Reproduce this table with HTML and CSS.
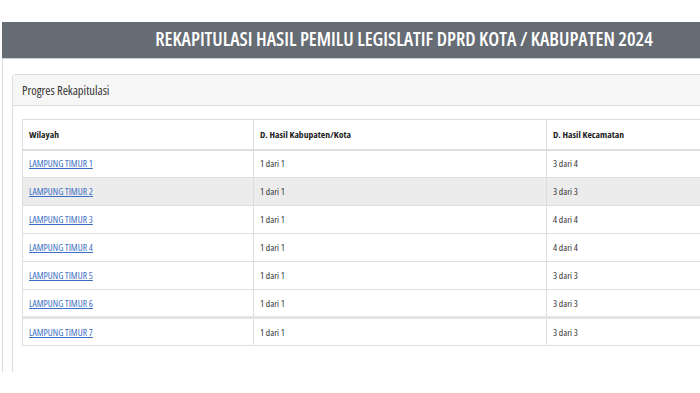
FILE: index.html
```html
<!DOCTYPE html>
<html>
<head>
<meta charset="utf-8">
<link rel="stylesheet" href="styles.css">
</head>
<body>
<div class="page">
  <header class="banner">
    <h1 class="banner-title">REKAPITULASI HASIL PEMILU LEGISLATIF DPRD KOTA / KABUPATEN 2024</h1>
  </header>
  <div class="wrap">
    <section class="card">
      <div class="card-head">Progres Rekapitulasi</div>
      <div class="card-body">
        <table class="tbl">
          <thead>
            <tr><th class="c1">Wilayah</th><th class="c2">D. Hasil Kabupaten/Kota</th><th class="c3">D. Hasil Kecamatan</th></tr>
          </thead>
          <tbody>
            <tr><td><a href="#">LAMPUNG TIMUR 1</a></td><td>1 dari 1</td><td>3 dari 4</td></tr>
            <tr class="hl"><td><a href="#">LAMPUNG TIMUR 2</a></td><td>1 dari 1</td><td>3 dari 3</td></tr>
            <tr><td><a href="#">LAMPUNG TIMUR 3</a></td><td>1 dari 1</td><td>4 dari 4</td></tr>
            <tr><td><a href="#">LAMPUNG TIMUR 4</a></td><td>1 dari 1</td><td>4 dari 4</td></tr>
            <tr><td><a href="#">LAMPUNG TIMUR 5</a></td><td>1 dari 1</td><td>3 dari 3</td></tr>
            <tr><td><a href="#">LAMPUNG TIMUR 6</a></td><td>1 dari 1</td><td>3 dari 3</td></tr>
            <tr class="thick"><td><a href="#">LAMPUNG TIMUR 7</a></td><td>1 dari 1</td><td>3 dari 3</td></tr>
          </tbody>
        </table>
      </div>
    </section>
  </div>
</div>
</body>
</html>
```
FILE: styles.css
```css
* { box-sizing: border-box; }
html, body { margin: 0; padding: 0; background: #fff; overflow: hidden; }
body {
  width: 700px; height: 393px;
  font-family: "Open Sans", "Liberation Sans", sans-serif;
  font-stretch: 75%;
  color: #333;
}
.page { padding-top: 22px; padding-left: 2px; }
.banner {
  height: 37px;
  background: #666c74;
  display: flex;
  align-items: flex-start;
  justify-content: center;
  padding-left: 106px;
  border-bottom: 1px solid #cfd2d5;
}
.banner-title {
  margin: 3px 0 0;
  font-size: 19.3px;
  font-weight: 600;
  color: #fff;
  white-space: nowrap;
  letter-spacing: 0;
}
.wrap {
  border-left: 1px solid #dcdcdc;
  height: 313px;
  padding: 15px 0 0 9px;
}
.card {
  border: 1px solid #dcdcdc;
  border-right: none;
  border-bottom: none;
  border-radius: 4px 0 0 0;
  height: 298px;
  margin-right: -10px;
}
.card-head {
  height: 31px;
  background: #f6f6f6;
  border-bottom: 1px solid #dcdcdc;
  padding: 7px 0 0 9px;
  font-size: 12.5px;
  color: #333;
}
.card-body { padding: 13px 0 0 9px; }
.tbl {
  border-collapse: collapse;
  width: 700px;
  table-layout: fixed;
  font-size: 9.6px;
}
.tbl th, .tbl td {
  border: 1px solid #dedede;
  text-align: left;
  padding: 0 6px;
}
.tbl th { height: 30px; font-weight: 700; color: #222; border-bottom-width: 2px; }
.tbl td { height: 28px; color: #333; }
.c1 { width: 231px; }
.c2 { width: 293px; }
.c3 { width: 176px; }
.tbl a { color: #3c6fc4; text-decoration: underline; }
.tbl tr.hl td { background: #ececec; }
.tbl tr.thick td { border-top: 3px solid #e4e4e4; }
```
